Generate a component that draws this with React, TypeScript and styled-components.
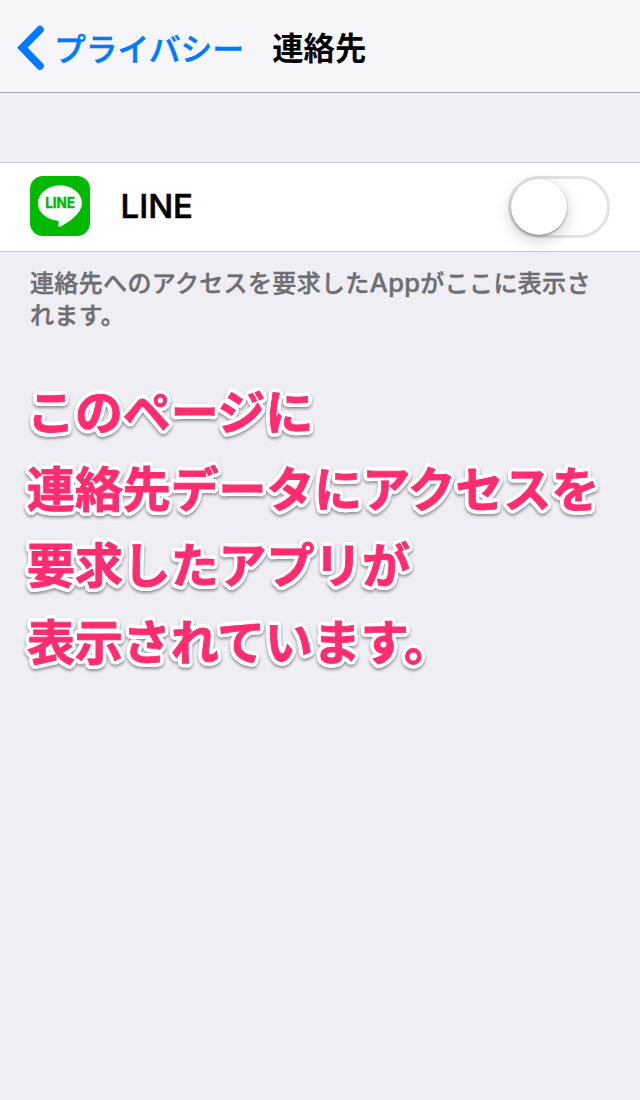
import React from 'react';
import styled, { createGlobalStyle } from 'styled-components';

const GlobalStyle = createGlobalStyle`
  * { box-sizing: border-box; }
  body {
    margin: 0;
    background: #efeef5;
    font-family: "Noto Sans CJK JP", sans-serif;
  }
`;

const Screen = styled.main`
  min-height: 1100px;
  background: #efeef5;
  overflow: hidden;
`;

const NavBar = styled.header`
  display: flex;
  align-items: center;
  height: 93px;
  padding: 2px 0 0 16px;
  background: #f6f6f9;
  border-bottom: 1px solid #a9a9ad;
`;

const BackButton = styled.a`
  display: flex;
  align-items: center;
  color: #007aff;
`;

const BackIcon = styled.svg`
  display: block;
  width: 29px;
  height: 46px;
  margin: 1px 9px 0 0;
`;

const NavText = styled.span`
  font-size: 31.8px;
  font-weight: 500;
  line-height: 46px;
  white-space: nowrap;
  -webkit-text-stroke: 0.5px currentColor;
`;

const Title = styled.h1`
  margin: 0 0 0 28px;
  font-size: 31.4px;
  font-weight: 700;
  line-height: 46px;
  white-space: nowrap;
  color: #000;
`;

const AppRow = styled.section`
  display: flex;
  align-items: center;
  height: 90px;
  margin-top: 69px;
  padding: 0 30px;
  background: #fff;
  border-top: 1px solid #c8c7cc;
  border-bottom: 1px solid #c8c7cc;
`;

const AppIcon = styled.svg`
  display: block;
  width: 60px;
  height: 60px;
  margin-top: -2px;
`;

const AppName = styled.span`
  flex: 1;
  margin: -2px 0 0 30.5px;
  font-family: Inter, sans-serif;
  font-size: 33px;
  font-weight: 500;
  line-height: 40px;
  color: #000;
  -webkit-text-stroke: 0.6px currentColor;
`;

const Switch = styled.span`
  display: block;
  width: 102px;
  height: 62px;
  border: 3px solid #e3e3e4;
  border-radius: 31px;
  background: #fff;
`;

const Knob = styled.span`
  display: block;
  width: 56px;
  height: 56px;
  border-radius: 50%;
  background: #fff;
  box-shadow: 0 1px 2px rgba(0, 0, 0, 0.4), 0 5px 16px rgba(0, 0, 0, 0.2);
`;

const Footnote = styled.p`
  margin: 14px 30px 0;
  font-size: 24px;
  font-weight: 500;
  line-height: 32px;
  letter-spacing: 0.35px;
  white-space: nowrap;
  color: #6d6d72;
  -webkit-text-stroke: 0.4px currentColor;
`;

const Latin = styled.span`
  font-family: Inter, sans-serif;
  font-size: 25.5px;
  line-height: 1;
`;

const Callout = styled.p`
  margin: 41px 0 0 27px;
  font-size: 47.9px;
  font-weight: 700;
  line-height: 76.7px;
  white-space: nowrap;
  color: #ff2d70;
  -webkit-text-stroke: 0.9px currentColor;
  text-shadow:
    4px 0 #fff, 3.7px 1.5px #fff, 2.8px 2.8px #fff, 1.5px 3.7px #fff,
    0 4px #fff, -1.5px 3.7px #fff, -2.8px 2.8px #fff, -3.7px 1.5px #fff,
    -4px 0 #fff, -3.7px -1.5px #fff, -2.8px -2.8px #fff, -1.5px -3.7px #fff,
    0 -4px #fff, 1.5px -3.7px #fff, 2.8px -2.8px #fff, 3.7px -1.5px #fff,
    2px 0 #fff, 0 2px #fff, -2px 0 #fff, 0 -2px #fff;
  filter: drop-shadow(0 2px 1.5px rgba(0, 0, 0, 0.4));
`;

export default function App() {
  return (
    <>
      <GlobalStyle />
      <Screen>
        <NavBar>
          <BackButton>
            <BackIcon viewBox="0 0 29 46">
              <path d="M24 4.6 L6.4 22.7 L24 41" fill="none" stroke="currentColor" strokeWidth="7.6" strokeLinecap="round" strokeLinejoin="miter" />
            </BackIcon>
            <NavText>プライバシー</NavText>
          </BackButton>
          <Title>連絡先</Title>
        </NavBar>
        <AppRow>
          <AppIcon viewBox="0 0 60 60">
            <rect width="60" height="60" rx="13" fill="#00b900" />
            <path d="M30 9.5C18 9.5 8 17.3 8 27.2C8 36.3 16.5 43.5 27.5 44.7C29 45 28.8 46.5 28.4 49.5C28.2 51 29.2 51.3 30.5 50.6C37 47 52 38 52 27.2C52 17.3 42 9.5 30 9.5Z" fill="#fff" />
            <text x="15.2" y="32.4" textLength="29.8" lengthAdjust="spacingAndGlyphs" fontFamily="Inter, sans-serif" fontSize="14" fontWeight="700" fill="#00b900" stroke="#00b900" strokeWidth="0.4">LINE</text>
          </AppIcon>
          <AppName>LINE</AppName>
          <Switch><Knob /></Switch>
        </AppRow>
        <Footnote>
          連絡先へのアクセスを要求した<Latin>App</Latin>がここに表示さ<br />れます。
        </Footnote>
        <Callout>
          このページに<br />連絡先データにアクセスを<br />要求したアプリが<br />表示されています。
        </Callout>
      </Screen>
    </>
  );
}
